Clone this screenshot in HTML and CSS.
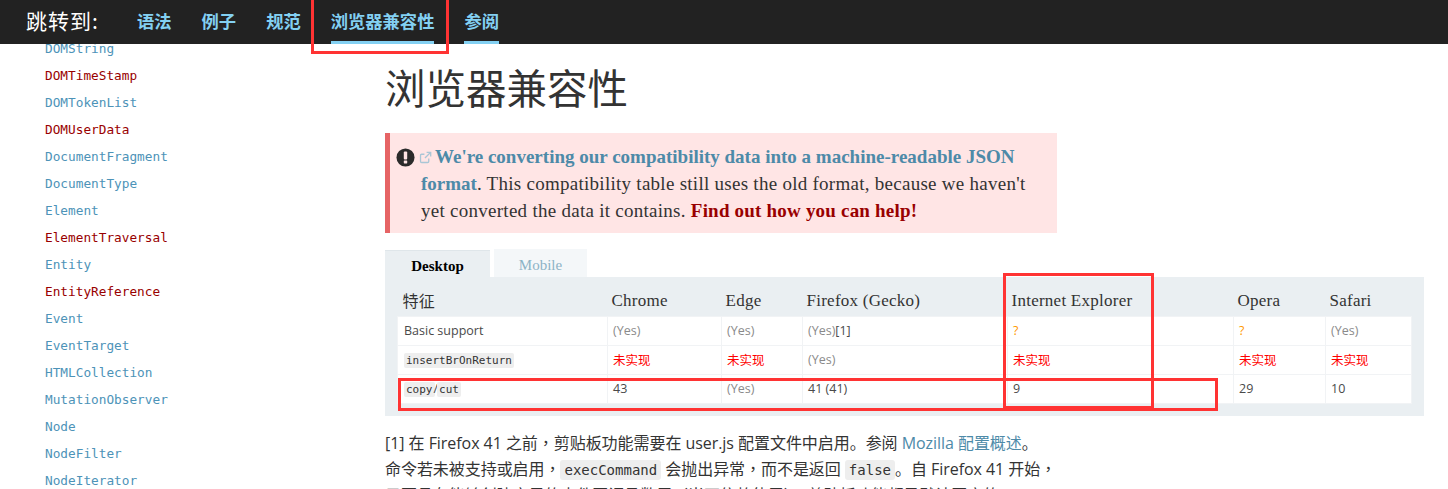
FILE: index.html
```html
<!DOCTYPE html>
<html lang="zh-CN">
<head>
<meta charset="utf-8">
<title>浏览器兼容性</title>
<link rel="stylesheet" href="styles.css">
</head>
<body>
<nav class="topbar">
  <span class="jump">跳转到:</span>
  <a class="nav-link">语法</a>
  <a class="nav-link">例子</a>
  <a class="nav-link">规范</a>
  <a class="nav-link active">浏览器兼容性</a>
  <a class="nav-link active">参阅</a>
</nav>
<div class="page">
  <ul class="sidebar">
    <li>DOMString</li>
    <li class="missing">DOMTimeStamp</li>
    <li>DOMTokenList</li>
    <li class="missing">DOMUserData</li>
    <li>DocumentFragment</li>
    <li>DocumentType</li>
    <li>Element</li>
    <li class="missing">ElementTraversal</li>
    <li>Entity</li>
    <li class="missing">EntityReference</li>
    <li>Event</li>
    <li>EventTarget</li>
    <li>HTMLCollection</li>
    <li>MutationObserver</li>
    <li>Node</li>
    <li>NodeFilter</li>
    <li>NodeIterator</li>
  </ul>
  <main class="content">
    <h1 class="title">浏览器兼容性</h1>
    <div class="alert">
      <svg class="alert-icon" viewBox="0 0 20 20" aria-hidden="true"><circle cx="10" cy="10" r="9.5" fill="#2b2b2b"/><rect x="8.2" y="3.8" width="3.6" height="8.2" rx="1" fill="#ffe5e5"/><rect x="8.2" y="13.2" width="3.6" height="3" rx=".6" fill="#ffe5e5"/></svg>
      <p class="alert-text"><svg class="ext" viewBox="0 0 12 12" aria-hidden="true"><path d="M9 7v2.600a1 1 0 0 1-1 1H2.400a1 1 0 0 1-1-1V4a1 1 0 0 1 1-1H5" fill="none" stroke="#a9c6d6" stroke-width="1.200"/><path d="M7 1.200h3.800V5M10.600 1.400 5.500 6.500" fill="none" stroke="#a9c6d6" stroke-width="1.200"/></svg><a class="alert-link">We're converting our compatibility data into a machine-readable JSON<br>format</a>. This compatibility table still uses the old format, because we haven't<br>yet converted the data it contains. <a class="alert-help">Find out how you can help!</a></p>
    </div>
    <div class="tabs">
      <div class="tab current">Desktop</div>
      <div class="tab">Mobile</div>
    </div>
    <div class="panel">
      <table class="compat">
        <thead>
          <tr><th class="c1">特征</th><th class="c2">Chrome</th><th class="c3">Edge</th><th class="c4">Firefox (Gecko)</th><th class="c5">Internet Explorer</th><th class="c6">Opera</th><th class="c7">Safari</th></tr>
        </thead>
        <tbody>
          <tr><td class="feature">Basic support</td><td class="yes">(Yes)</td><td class="yes">(Yes)</td><td><span class="yes">(Yes)</span>[1]</td><td class="unknown">?</td><td class="unknown">?</td><td class="yes">(Yes)</td></tr>
          <tr><td class="feature"><code>insertBrOnReturn</code></td><td class="no">未实现</td><td class="no">未实现</td><td class="yes">(Yes)</td><td class="no">未实现</td><td class="no">未实现</td><td class="no">未实现</td></tr>
          <tr><td class="feature"><code>copy</code><span class="slash">/</span><code>cut</code></td><td>43</td><td class="yes">(Yes)</td><td>41 (41)</td><td>9</td><td>29</td><td>10</td></tr>
        </tbody>
      </table>
    </div>
    <p class="note">[1] 在 Firefox 41 之前<span class="punct">&#xFF0C;</span>剪贴板功能需要在 user.js 配置文件中启用。参阅 <a class="note-link">Mozilla 配置概述</a>。<br>命令若未被支持或启用<span class="punct">&#xFF0C;</span><code class="inline">execCommand</code> 会抛出异常<span class="punct">&#xFF0C;</span>而不是返回 <code class="inline">false</code>。自 Firefox 41 开始<span class="punct">&#xFF0C;</span><br>只要具有能够创建充足的事件回调函数用<span class="punct">&#xFF08;</span>当不信赖使用<span class="punct">&#xFF09;</span><span class="punct">&#xFF0C;</span>剪贴板功能都是默认开启的。</p>
  </main>
</div>
<div class="mark mark-nav"></div>
<div class="mark mark-ie"></div>
<div class="mark mark-row"></div>
</body>
</html>
```
FILE: styles.css
```css
* { box-sizing: border-box; }
html, body { margin: 0; height: 489px; overflow: hidden; background: #fff; }
body { font-family: "Open Sans", "Noto Sans CJK SC", sans-serif; color: #333; position: relative; }
.topbar { height: 44px; background: #222; display: flex; align-items: stretch; padding-left: 26px; gap: 30px; }
.jump { color: #fff; font-size: 21px; letter-spacing: 1px; line-height: 40px; width: 81px; font-family: "Noto Sans CJK SC", sans-serif; font-weight: 400; }
.nav-link { color: #83d0f2; font-size: 17.3px; font-weight: 700; line-height: 42px; height: 44px; font-family: "Noto Sans CJK SC", sans-serif; border-bottom: 3px solid transparent; }
.nav-link.active { border-bottom-color: #83d0f2; }
.page { display: flex; height: 445px; overflow: hidden; }
.sidebar { list-style: none; margin: -9px 0 0; padding: 0 0 0 45px; width: 385px; flex: none; font-family: "DejaVu Sans Mono", monospace; font-size: 12.75px; color: #4d93b8; }
.sidebar li { height: 27px; line-height: 27px; }
.sidebar .missing { color: #900; }
.content { width: 1027px; flex: none; }
.title { margin: 18px 0 0; font-size: 40.5px; line-height: 50px; font-weight: 400; color: #333; font-family: "Noto Sans CJK SC", serif; }
.alert { margin-top: 21px; width: 672px; height: 100px; background: #ffe5e5; border-left: 5px solid #e66465; display: flex; padding: 10px 0 0 6px; }
.alert-icon { width: 19px; height: 19px; flex: none; margin-top: 5px; }
.alert-text { margin: 0 0 0 6px; font-family: "Liberation Serif", serif; font-size: 19px; line-height: 27px; letter-spacing: .27px; white-space: nowrap; color: #333; }
.ext { width: 13px; height: 13px; margin: 0 3px 0 -2px; vertical-align: -1px; }
.alert-link { color: #4d8aa8; font-weight: 700; letter-spacing: 0; }
.alert-help { color: #900; font-weight: 700; letter-spacing: .2px; }
.tabs { display: flex; gap: 4px; margin-top: 16px; height: 28px; align-items: flex-end; font-family: "Liberation Serif", serif; font-size: 15px; }
.tab { width: 93px; height: 28px; background: #f4f7f9; color: #8db3c6; text-align: center; line-height: 33px; }
.tab.current { width: 105px; height: 27px; background: #eaeff2; color: #000; border-top: 1px solid #dfe6ea; line-height: 31px; font-weight: 700; }
.panel { background: #eaeff2; padding: 0 12px 12px; width: 1039px; height: 139px; }
.compat { border-collapse: collapse; table-layout: fixed; width: 1014px; font-size: 12.5px; }
.c1 { width: 210px; } .c2 { width: 114px; } .c3 { width: 81px; } .c4 { width: 205px; } .c5 { width: 226px; } .c6 { width: 92px; } .c7 { width: 86px; }
.compat th { height: 39px; padding: 10px 0 0 4px; text-align: left; font-family: "Liberation Serif", "Noto Sans CJK SC", serif; font-size: 17px; letter-spacing: .25px; font-weight: 400; color: #333; }
.compat th.c1 { font-size: 16px; padding: 7px 0 0 5px; }
.compat td { height: 29px; padding: 0 5px; background: #fff; border: 1px solid #f1f3f5; color: #4a4a4a; }
.compat td.feature { padding-left: 6px; }
.compat td.yes, .yes { color: #8a8a8a; }
.compat td.no { color: #f00; }
.compat td.unknown { color: #f90; }
code { font-family: "DejaVu Sans Mono", monospace; font-size: 11px; background: #eee; border-radius: 2px; padding: 1px 2px; color: #333; }
.slash { margin: 0 -1px; }
.note { margin: 14px 0 0; font-size: 16px; line-height: 26px; letter-spacing: -.05px; white-space: nowrap; color: #333; }
.punct { font-family: "Noto Sans CJK TC", sans-serif; font-feature-settings: "locl" 0; line-height: 1; }
.inline { font-size: 14px; line-height: 1; padding: 2px 4px; border-radius: 3px; letter-spacing: 0; }
.note-link { color: #4d8aa8; }
.mark { position: absolute; border: 3px solid #f33; pointer-events: none; }
.mark-nav { left: 311px; top: -3px; width: 138px; height: 57px; }
.mark-ie { left: 1003px; top: 273px; width: 151px; height: 136px; }
.mark-row { left: 398px; top: 378px; width: 820px; height: 33px; }
```
